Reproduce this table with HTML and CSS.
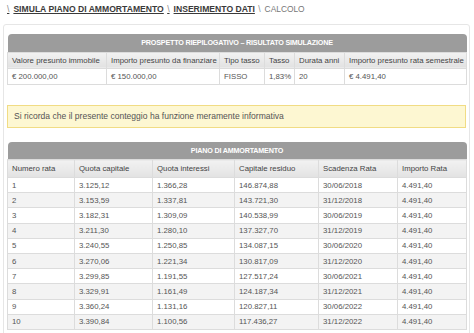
FILE: index.html
```html
<!DOCTYPE html>
<html lang="it">
<head>
  <meta charset="UTF-8">
  <title>Simula piano di ammortamento - Calcolo</title>
  <link rel="stylesheet" href="styles.css">
</head>
<body>

  <div class="crumbs">
    <a href="#"><span class="sep">\</span>SIMULA PIANO DI AMMORTAMENTO</a>
    <a href="#"><span class="sep">\</span>INSERIMENTO DATI</a>
    <span class="current"><span class="sep">\</span>CALCOLO</span>
  </div>

  <div class="panel">

    <table class="grid summary">
      <colgroup>
        <col style="width:99px"><col style="width:113px"><col style="width:45px">
        <col style="width:30px"><col style="width:50px"><col>
      </colgroup>
      <tr><th class="title" colspan="6">PROSPETTO RIEPILOGATIVO – RISULTATO SIMULAZIONE</th></tr>
      <tr>
        <th>Valore presunto immobile</th>
        <th>Importo presunto da finanziare</th>
        <th>Tipo tasso</th>
        <th>Tasso</th>
        <th>Durata anni</th>
        <th>Importo presunto rata semestrale</th>
      </tr>
      <tr>
        <td>€ 200.000,00</td>
        <td>€ 150.000,00</td>
        <td>FISSO</td>
        <td>1,83%</td>
        <td>20</td>
        <td>€ 4.491,40</td>
      </tr>
    </table>

    <div class="note">Si ricorda che il presente conteggio ha funzione meramente informativa</div>

    <table class="grid plan">
      <colgroup>
        <col style="width:67px"><col style="width:78px"><col style="width:82px">
        <col style="width:84px"><col style="width:79px"><col>
      </colgroup>
      <tr><th class="title" colspan="6">PIANO DI AMMORTAMENTO</th></tr>
      <tr>
        <th>Numero rata</th>
        <th>Quota capitale</th>
        <th>Quota interessi</th>
        <th>Capitale residuo</th>
        <th>Scadenza Rata</th>
        <th>Importo Rata</th>
      </tr>
      <tbody id="rows"></tbody>
    </table>

  </div>

  <script>
    // righe del piano di ammortamento
    const rate = [
      ["3.125,12", "1.366,28", "146.874,88", "30/06/2018"],
      ["3.153,59", "1.337,81", "143.721,30", "31/12/2018"],
      ["3.182,31", "1.309,09", "140.538,99", "30/06/2019"],
      ["3.211,30", "1.280,10", "137.327,70", "31/12/2019"],
      ["3.240,55", "1.250,85", "134.087,15", "30/06/2020"],
      ["3.270,06", "1.221,34", "130.817,09", "31/12/2020"],
      ["3.299,85", "1.191,55", "127.517,24", "30/06/2021"],
      ["3.329,91", "1.161,49", "124.187,34", "31/12/2021"],
      ["3.360,24", "1.131,16", "120.827,11", "30/06/2022"],
      ["3.390,84", "1.100,56", "117.436,27", "31/12/2022"]
    ];

    let body = document.getElementById("rows");
    rate.forEach((r, i) => {
      let tr = document.createElement("tr");
      tr.innerHTML = `
        <td>${i + 1}</td>
        <td>${r[0]}</td>
        <td>${r[1]}</td>
        <td>${r[2]}</td>
        <td>${r[3]}</td>
        <td>4.491,40</td>
      `;
      body.appendChild(tr);
    });
  </script>

</body>
</html>
```

FILE: styles.css
```css
* {
  margin: 0;
  padding: 0;
  box-sizing: border-box;
}

html, body {
  font-family: 'Liberation Sans', Arial, sans-serif;
  background-color: #ffffff;
  color: #555;
  overflow: hidden;
}

.crumbs {
  height: 24px;
  padding: 4px 0 0 7px;
  font-size: 8.6px;
  color: #777;
  white-space: nowrap;
}

.crumbs a {
  color: #3a3a3a;
  font-weight: bold;
  text-decoration: underline;
  margin-right: 1px;
}

.crumbs .sep {
  font-weight: normal;
  color: #888;
  margin-right: 4px;
}

.crumbs .current {
  font-size: 8.4px;
}

.panel {
  margin-left: 3px;
  width: 467px;
  border: 1px solid #e6e6e6;
  border-radius: 3px;
  padding: 9px 3px 20px 3px;
}

.grid {
  width: 460px;
  border-collapse: collapse;
  table-layout: fixed;
  font-size: 7.8px;
}

.grid th,
.grid td {
  border: 1px solid #dcdcdc;
  text-align: left;
  font-weight: normal;
  padding: 0 4px;
  white-space: nowrap;
  overflow: hidden;
}

.grid th {
  height: 16px;
  color: #444;
  background: linear-gradient(#f2f2f2, #e2e2e2);
}

.grid td {
  height: 16px;
  color: #555;
}

.grid th.title {
  height: 18px;
  background: #9c9c9c;
  color: #fff;
  font-size: 7.2px;
  font-weight: bold;
  text-align: center;
  letter-spacing: -0.2px;
  border: none;
  border-radius: 4px 4px 0 0;
}

.note {
  margin: 20px 0 14px 0;
  height: 23px;
  padding: 0 6px;
  line-height: 21px;
  font-size: 8.55px;
  color: #555;
  background-color: #fdf7d2;
  border: 1px solid #f1dc84;
}

.plan th {
  height: 18px;
}

.plan td {
  height: 15.2px;
}

.plan tbody tr:nth-child(even) td {
  background-color: #f3f3f3;
}
```
